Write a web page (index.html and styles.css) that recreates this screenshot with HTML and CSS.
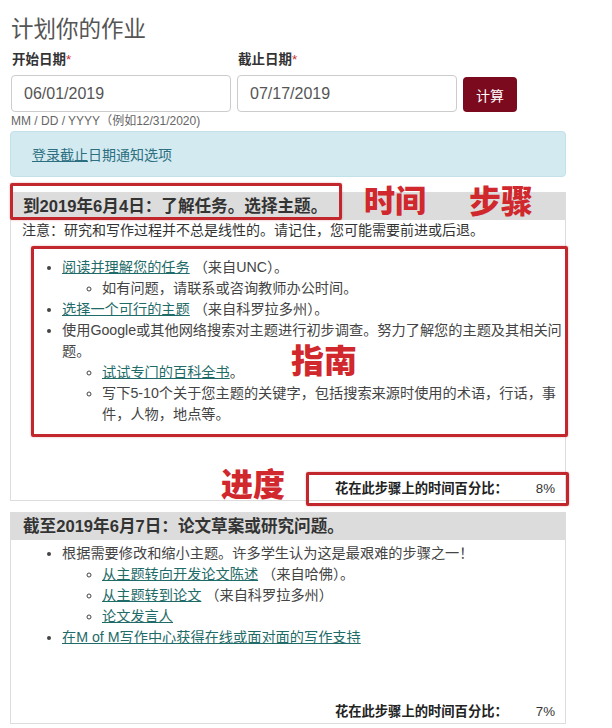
FILE: index.html
```html
<!DOCTYPE html>
<html lang="zh-CN">
<head>
<meta charset="utf-8">
<title>计划你的作业</title>
<link rel="stylesheet" href="styles.css">
</head>
<body>
<div class="page">
  <h1 class="title">计划你的作业</h1>
  <form class="dates">
    <div class="field">
      <label class="label">开始日期<span class="req">*</span></label>
      <input class="input" type="text" value="06/01/2019">
    </div>
    <div class="field">
      <label class="label">截止日期<span class="req">*</span></label>
      <input class="input" type="text" value="07/17/2019">
    </div>
    <button class="btn" type="button">计算</button>
  </form>
  <div class="hint">MM / DD / YYYY（例如12/31/2020)</div>
  <div class="alert"><a class="alert-link" href="#"><u>登录截止</u>日期通知选项</a></div>

  <section class="panel">
    <h2 class="panel-head">到2019年6月4日：了解任务。选择主题。</h2>
    <p class="note">注意：研究和写作过程并不总是线性的。请记住，您可能需要前进或后退。</p>
    <ul class="steps steps-first">
      <li><a href="#">阅读并理解您的任务</a> （来自UNC）。
        <ul><li>如有问题，请联系或咨询教师办公时间。</li></ul>
      </li>
      <li><a href="#">选择一个可行的主题</a> （来自科罗拉多州）。</li>
      <li>使用Google或其他网络搜索对主题进行初步调查。努力了解您的主题及其相关问题。
        <ul>
          <li><a href="#">试试专门的百科全书</a>。</li>
          <li>写下5-10个关于您主题的关键字，包括搜索来源时使用的术语，行话，事件，人物，地点等。</li>
        </ul>
      </li>
    </ul>
    <div class="progress"><span class="progress-label">花在此步骤上的时间百分比：</span><span class="progress-val">8%</span></div>
  </section>

  <section class="panel">
    <h2 class="panel-head">截至2019年6月7日：论文草案或研究问题。</h2>
    <ul class="steps steps-second">
      <li>根据需要修改和缩小主题。许多学生认为这是最艰难的步骤之一！
        <ul>
          <li><a href="#">从主题转向开发论文陈述</a> （来自哈佛）。</li>
          <li><a href="#">从主题转到论文</a> （来自科罗拉多州）</li>
          <li><a href="#">论文发言人</a></li>
        </ul>
      </li>
      <li><a href="#">在M of M写作中心获得在线或面对面的写作支持</a></li>
    </ul>
    <div class="progress"><span class="progress-label">花在此步骤上的时间百分比：</span><span class="progress-val">7%</span></div>
  </section>

  <div class="mark box-time"></div>
  <div class="mark box-guide"></div>
  <div class="mark box-progress"></div>
  <div class="anno anno-time">时间</div>
  <div class="anno anno-step">步骤</div>
  <div class="anno anno-guide">指南</div>
  <div class="anno anno-progress">进度</div>
</div>
</body>
</html>
```

FILE: styles.css
```css
* { box-sizing: border-box; }
html, body { margin: 0; padding: 0; background: #fff; }
body {
  font-family: "Liberation Sans", "Noto Sans CJK SC", sans-serif;
  color: #333;
  width: 612px;
  height: 728px;
  overflow: hidden;
}
.page {
  position: relative;
  padding: 15px 0 0 10px;
  width: 566px;
}
.title {
  margin: 0 0 6px 1px;
  font-size: 22.5px;
  line-height: 30px;
  font-weight: normal;
  color: #555;
}
.dates {
  display: flex;
  align-items: flex-end;
  gap: 6px;
  margin: 0 0 0 1px;
}
.field { display: flex; flex-direction: column; width: 220px; }
.label {
  font-size: 13.5px;
  line-height: 18px;
  font-weight: bold;
  color: #333;
  margin: 0 0 6px 1px;
}
.req { color: #c9302c; font-weight: normal; }
.input {
  height: 37px;
  border: 1px solid #ccc;
  border-radius: 4px;
  padding: 0 12px;
  font-family: "Liberation Sans", sans-serif;
  font-size: 16px;
  color: #555;
  background: #fff;
  outline: none;
}
.btn {
  height: 35px;
  width: 54px;
  background: #7b0a1f;
  color: #fff;
  border: 0;
  border-radius: 4px;
  font-family: "Liberation Sans", "Noto Sans CJK SC", sans-serif;
  font-size: 14px;
  padding: 0;
}
.hint {
  margin: 1px 0 2px 1px;
  font-size: 12px;
  line-height: 16px;
  color: #666;
}
.alert {
  height: 46px;
  background: #d3eaf1;
  border: 1px solid #c2e1e9;
  border-radius: 4px;
  padding: 0 21px;
  display: flex;
  align-items: center;
  margin-bottom: 15px;
}
.alert-link {
  color: #2b6f80;
  text-decoration: none;
  font-size: 14px;
}
.panel {
  border: 1px solid #ddd;
  margin-bottom: 11px;
  padding-bottom: 1px;
}
.panel-head {
  margin: 0;
  background: #dcdcdc;
  height: 27px;
  line-height: 28px;
  padding: 0 12px;
  font-size: 16.6px;
  font-weight: bold;
  color: #333;
}
.note {
  margin: 0;
  padding: 0 11px;
  font-size: 14px;
  line-height: 20px;
  color: #333;
}
.steps {
  margin: 0;
  padding: 0 0 0 51px;
  font-size: 14.2px;
  line-height: 21px;
  color: #444;
  list-style: disc;
}
.steps ul {
  margin: 0;
  padding-left: 40px;
  list-style: circle;
}
.steps-first { margin-top: 17px; }
.steps-second { margin-top: 3px; }
.steps a { color: #1f6b68; text-decoration: underline; }
.progress {
  display: flex;
  justify-content: flex-end;
  margin-top: 54px;
  padding-right: 10px;
  font-size: 13.3px;
  line-height: 20px;
}
.progress-label { font-weight: bold; color: #222; }
.progress-val { margin-left: 28px; color: #333; }

.mark {
  position: absolute;
  border: 3px solid #c1272d;
  border-radius: 2px;
  box-shadow: 0 0 2px rgba(193, 39, 45, 0.45);
}
.box-time { left: 10px; top: 183px; width: 332px; height: 37px; }
.box-guide { left: 31px; top: 246px; width: 537px; height: 191px; }
.box-progress { left: 306px; top: 472px; width: 263px; height: 34px; }
.anno {
  position: absolute;
  color: #d0282d;
  font-family: "Noto Sans CJK SC", sans-serif;
  font-weight: 900;
  line-height: 1;
}
.anno-time { left: 364px; top: 183px; font-size: 31px; }
.anno-step { left: 469px; top: 183px; font-size: 32px; }
.anno-guide { left: 291px; top: 343px; font-size: 33px; }
.anno-progress { left: 221px; top: 466px; font-size: 32px; }
```
